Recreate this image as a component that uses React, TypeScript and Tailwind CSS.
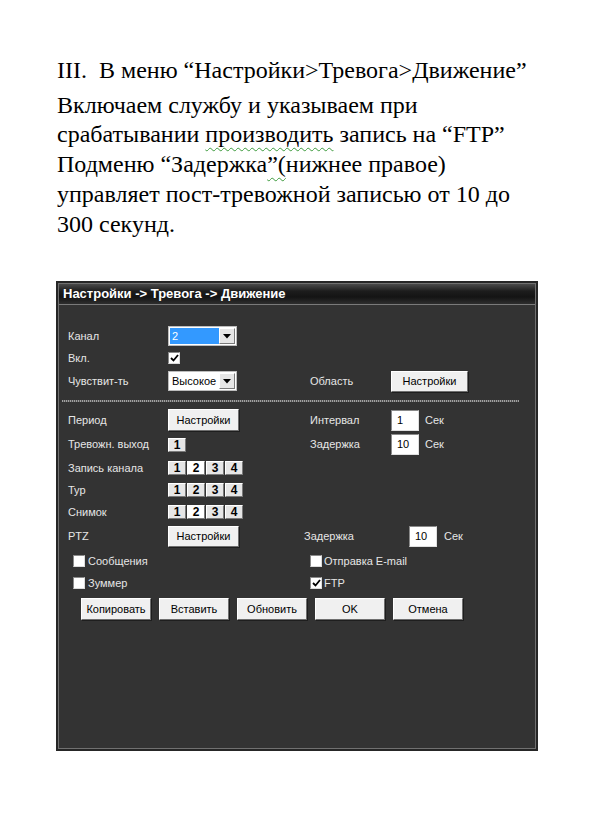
import React from "react";

const serif = { fontFamily: '"Liberation Serif", "Times New Roman", serif' };
const sans = { fontFamily: '"Liberation Sans", Arial, sans-serif' };

function Btn({ children, w = "w-[70px]", h = "h-[22px]" }: { children: React.ReactNode; w?: string; h?: string }) {
  return (
    <div
      className={`${w} ${h} flex items-center justify-center bg-[#f0f0f0] text-black text-[11px] border border-t-white border-l-white border-b-[#6f6f6f] border-r-[#6f6f6f] shadow-[1px_1px_0_#1e1e1e]`}
    >
      {children}
    </div>
  );
}

function Check({ checked = false }: { checked?: boolean }) {
  return (
    <div className="w-[12px] h-[12px] bg-white border border-t-[#8a8a8a] border-l-[#8a8a8a] border-b-[#dcdcdc] border-r-[#dcdcdc] flex items-center justify-center">
      {checked && (
        <svg width="9" height="8" viewBox="0 0 9 8">
          <polyline points="1,4 3.5,6.5 8,1" fill="none" stroke="#000" strokeWidth="1.8" />
        </svg>
      )}
    </div>
  );
}

function Select({ value, active = false }: { value: string; active?: boolean }) {
  return (
    <div className="w-[69px] h-[20px] bg-white border border-[#bdbdbd] p-[1px] flex">
      <div
        className={`flex-1 flex items-center pl-[2px] text-[11px] ${active ? "bg-[#3399ff] text-white" : "bg-white text-black"}`}
      >
        {value}
      </div>
      <div className="w-[16px] bg-[#e6e6e6] border border-t-white border-l-white border-b-[#7a7a7a] border-r-[#7a7a7a] flex items-center justify-center">
        <svg width="8" height="5" viewBox="0 0 8 5">
          <polygon points="0,0 8,0 4,4.5" fill="#000" />
        </svg>
      </div>
    </div>
  );
}

function Input({ value }: { value: string }) {
  return (
    <div className="w-[28px] h-[21px] bg-white border border-t-[#8a8a8a] border-l-[#8a8a8a] border-b-[#e0e0e0] border-r-[#e0e0e0] flex items-center pl-[5px] text-[11px] text-black">
      {value}
    </div>
  );
}

function Boxes({ count, active = [] as number[] }: { count: number; active?: number[] }) {
  const items = Array.from({ length: count }, (_, i) => i + 1);
  return (
    <div className="flex gap-[1px]">
      {items.map((n) => (
        <div
          key={n}
          className={`w-[18px] h-[14px] flex items-center justify-center text-[12px] font-bold leading-none text-black border border-t-white border-l-white border-b-[#7a7a7a] border-r-[#7a7a7a] ${
            active.includes(n) ? "bg-white" : "bg-[#e6e6e6]"
          }`}
        >
          {n}
        </div>
      ))}
    </div>
  );
}

export default function App() {
  const wavy = "underline decoration-wavy decoration-[#3c9a3c] decoration-1 underline-offset-[5px]";
  return (
    <div className="w-[591px] min-h-[838px] bg-white overflow-hidden">
      <div className="pl-[57px] pt-[56px] text-black text-[24px] leading-[29px]" style={serif}>
        <p>III.&nbsp;&nbsp;В меню “Настройки&gt;Тревога&gt;Движение”</p>
        <p className="mt-[6px]">
          Включаем службу и указываем при
          <br />
          срабатывании <span className={wavy}>производить</span> запись на “FTP”
        </p>
        <p className="leading-[30px]">
          Подменю “Задержка<span className={wavy}>”(</span>нижнее правое)
          <br />
          управляет пост-тревожной записью от 10 до
          <br />
          300 секунд.
        </p>
      </div>

      <div className="ml-[56px] mt-[42px] w-[482px] h-[470px] bg-[#262626] p-[2px]" style={sans}>
        <div className="h-full border border-[#707070] bg-[#333333] flex flex-col">
          <div className="h-[21px] shrink-0 flex items-center pl-[4px] border-b border-[#7a7a7a] bg-[linear-gradient(#4a4a4a,#1d1d1d_35%,#141414_65%,#2e2e2e)] text-white text-[13px] font-bold">
            Настройки -&gt; Тревога -&gt; Движение
          </div>

          <div className="pt-[20px] pl-[9px] text-[11px] text-[#e6e6e6]">
            <div className="h-[22px] flex items-center">
              <span className="w-[100px]">Канал</span>
              <Select value="2" active />
            </div>
            <div className="h-[22px] flex items-center">
              <span className="w-[100px]">Вкл.</span>
              <Check checked />
            </div>
            <div className="h-[24px] flex items-center">
              <span className="w-[100px]">Чувствит-ть</span>
              <div className="w-[142px]">
                <Select value="Высокое" />
              </div>
              <span className="w-[81px]">Область</span>
              <Btn w="w-[77px]" h="h-[21px]">Настройки</Btn>
            </div>
            <div className="h-[15px] pt-[7px] -ml-[6px] w-[457px]">
              <div className="h-[2px] bg-[repeating-linear-gradient(90deg,#a0a0a0_0_1px,#555555_1px_2px)]" />
            </div>
            <div className="h-[24px] flex items-center">
              <span className="w-[100px]">Период</span>
              <div className="w-[142px]">
                <Btn w="w-[71px]">Настройки</Btn>
              </div>
              <span className="w-[81px]">Интервал</span>
              <Input value="1" />
              <span className="ml-[6px]">Сек</span>
            </div>
            <div className="h-[25px] flex items-center">
              <span className="w-[100px]">Тревожн. выход</span>
              <div className="w-[142px]">
                <Boxes count={1} />
              </div>
              <span className="w-[81px]">Задержка</span>
              <Input value="10" />
              <span className="ml-[6px]">Сек</span>
            </div>
            <div className="h-[22px] flex items-center">
              <span className="w-[100px]">Запись канала</span>
              <Boxes count={4} active={[2]} />
            </div>
            <div className="h-[22px] flex items-center">
              <span className="w-[100px]">Тур</span>
              <Boxes count={4} />
            </div>
            <div className="h-[22px] flex items-center">
              <span className="w-[100px]">Снимок</span>
              <Boxes count={4} active={[2]} />
            </div>
            <div className="h-[27px] flex items-center">
              <span className="w-[100px]">PTZ</span>
              <div className="w-[136px]">
                <Btn w="w-[71px]" h="h-[21px]">Настройки</Btn>
              </div>
              <span className="w-[105px]">Задержка</span>
              <Input value="10" />
              <span className="ml-[7px]">Сек</span>
            </div>
            <div className="h-[22px] flex items-center">
              <div className="w-[242px] pl-[5px] flex items-center gap-[3px]">
                <Check />
                <span>Сообщения</span>
              </div>
              <div className="flex items-center gap-[2px]">
                <Check />
                <span>Отправка E-mail</span>
              </div>
            </div>
            <div className="h-[22px] flex items-center">
              <div className="w-[242px] pl-[5px] flex items-center gap-[3px]">
                <Check />
                <span>Зуммер</span>
              </div>
              <div className="flex items-center gap-[2px]">
                <Check checked />
                <span>FTP</span>
              </div>
            </div>
            <div className="pt-[4px] pl-[13px] flex gap-[8px]">
              <Btn>Копировать</Btn>
              <Btn>Вставить</Btn>
              <Btn>Обновить</Btn>
              <Btn>OK</Btn>
              <Btn>Отмена</Btn>
            </div>
          </div>
        </div>
      </div>
    </div>
  );
}
